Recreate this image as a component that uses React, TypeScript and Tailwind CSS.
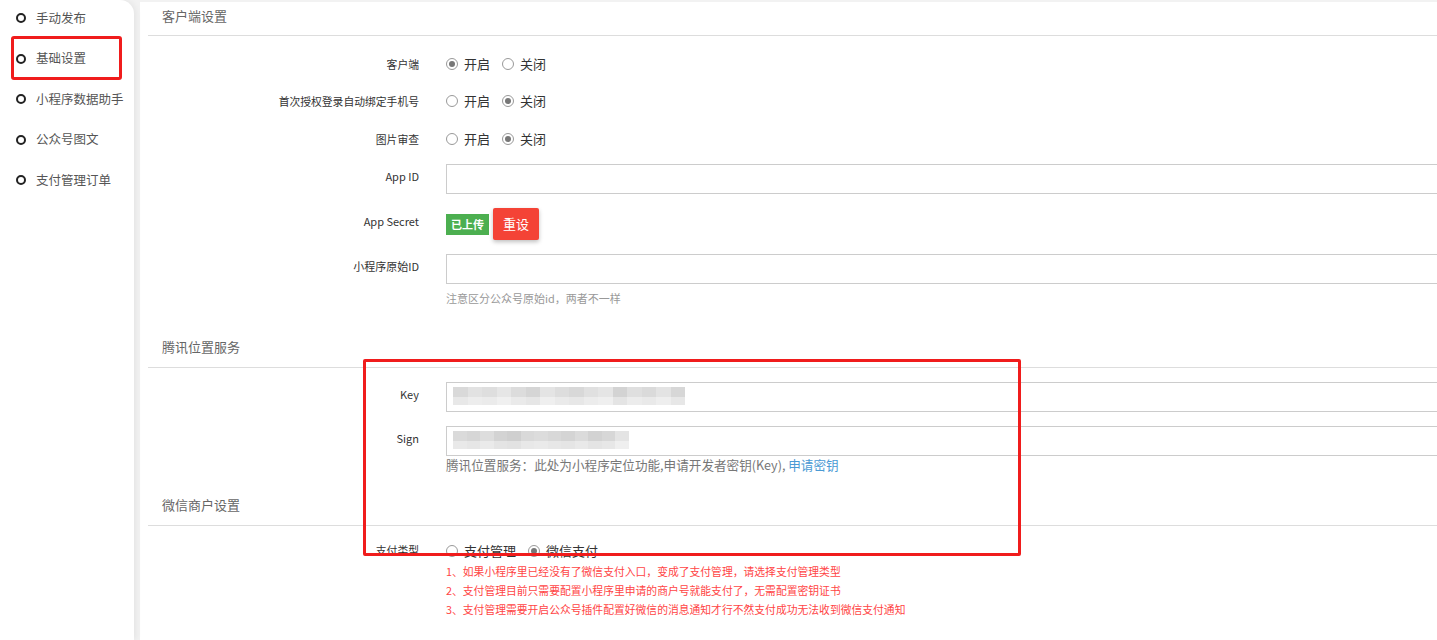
import React from 'react';

const FONT = { fontFamily: '"Microsoft YaHei", "Noto Sans CJK SC", "Liberation Sans", sans-serif' };

const MENU = ['手动发布', '基础设置', '小程序数据助手', '公众号图文', '支付管理订单'];

// mosaic shades for the masked key / sign values
const KEY_SHADES = ['#d9d9d9', '#e2e2e2', '#dedede', '#e6e6e6', '#dcdcdc', '#d5d5d5', '#e4e4e4', '#dddddd', '#d8d8d8', '#e0e0e0', '#e5e5e5', '#d3d3d3', '#dfdfdf', '#dadada', '#e3e3e3', '#d7d7d7'];
const SIGN_SHADES = ['#dadada', '#d6d6d6', '#dddddd', '#d3d3d3', '#cfcfcf', '#d9d9d9', '#dcdcdc', '#d8d8d8', '#d4d4d4', '#dbdbdb', '#d2d2d2', '#d7d7d7', '#e4e4e4'];

function Radio({ checked, label }: { checked: boolean; label: string }) {
  return (
    <span className="flex items-center gap-[6px] text-[13px] text-[#333]">
      <span className="flex h-[12px] w-[12px] items-center justify-center rounded-full border border-[#999] bg-white">
        {checked && <span className="h-[6px] w-[6px] rounded-full bg-[#777]" />}
      </span>
      {label}
    </span>
  );
}

function Row({ label, children, className = '' }: { label: string; children: React.ReactNode; className?: string }) {
  return (
    <div className={`flex items-center ${className}`}>
      <div className="w-[271px] shrink-0 text-right text-[10.8px] text-[#333]">{label}</div>
      <div className="ml-[27px] flex-1">{children}</div>
    </div>
  );
}

function Section({ title }: { title: string }) {
  return (
    <div className="flex h-[34px] items-center border-b border-[#ddd] pb-[6px] pl-[14px] text-[13px] text-[#666]">{title}</div>
  );
}

function Mosaic({ shades, cell }: { shades: string[]; cell: number }) {
  return (
    <div className="absolute left-[6px] top-[4px] flex flex-col blur-[0.6px]">
      <div className="flex">
        {shades.map((c, i) => (
          <span key={i} style={{ width: cell, height: 10, background: c }} />
        ))}
      </div>
      <div className="flex opacity-60">
        {shades.map((c, i) => (
          <span key={i} style={{ width: cell, height: 8, background: c }} />
        ))}
      </div>
    </div>
  );
}

function Input({ shades, cell }: { shades?: string[]; cell?: number }) {
  return (
    <div className="relative h-[30px] w-[1000px] border border-[#ccc] bg-white">
      {shades && cell && <Mosaic shades={shades} cell={cell} />}
    </div>
  );
}

export default function App() {
  return (
    <div className="relative h-[640px] w-[1437px] overflow-hidden bg-[#f2f2f2]" style={FONT}>
      <div className="flex h-full">
        <aside className="relative h-full w-[134px] shrink-0 rounded-tr-[14px] bg-white shadow-[2px_0_6px_rgba(0,0,0,0.06)]">
          <ul className="-mt-[2px] flex flex-col">
            {MENU.map((m) => (
              <li key={m} className="flex h-[40.5px] items-center gap-[10px] pl-[16px] text-[12.5px] text-[#555]">
                <span className="h-[10px] w-[10px] rounded-full border-2 border-[#222]" />
                {m}
              </li>
            ))}
          </ul>
          <div className="absolute left-[11px] top-[36px] h-[44px] w-[111px] rounded-[3px] border-[3px] border-[#f01c1c]" />
        </aside>

        <main className="ml-[6px] mt-[2px] flex-1 bg-white pl-[8px]">
          <Section title="客户端设置" />
          <div className="flex flex-col">
            <Row label="客户端" className="mt-[18px] h-[20px]">
              <div className="flex gap-[12px]">
                <Radio checked label="开启" />
                <Radio checked={false} label="关闭" />
              </div>
            </Row>
            <Row label="首次授权登录自动绑定手机号" className="mt-[17px] h-[20px]">
              <div className="flex gap-[12px]">
                <Radio checked={false} label="开启" />
                <Radio checked label="关闭" />
              </div>
            </Row>
            <Row label="图片审查" className="mt-[18px] h-[20px]">
              <div className="flex gap-[12px]">
                <Radio checked={false} label="开启" />
                <Radio checked label="关闭" />
              </div>
            </Row>
            <div className="mt-[15px] flex">
              <div className="w-[271px] shrink-0 pt-[4px] text-right text-[11px] text-[#333]">App ID</div>
              <div className="ml-[27px]">
                <Input />
              </div>
            </div>
            <div className="mt-[14px] flex h-[32px] items-center">
              <div className="w-[271px] shrink-0 pb-[6px] text-right text-[11px] text-[#333]">App Secret</div>
              <div className="ml-[27px] flex items-center gap-[4px]">
                <span className="flex h-[21px] items-center bg-[#4caf50] px-[5px] text-[11px] font-bold text-white">已上传</span>
                <span className="flex h-[32px] items-center rounded-[2px] bg-[#f44336] px-[10px] text-[13px] text-white shadow-[0_2px_4px_rgba(0,0,0,0.25)]">
                  重设
                </span>
              </div>
            </div>
            <div className="mt-[14px] flex">
              <div className="w-[271px] shrink-0 pt-[4px] text-right text-[11px] text-[#333]">小程序原始ID</div>
              <div className="ml-[27px]">
                <Input />
                <div className="mt-[6px] text-[11px] text-[#999]">注意区分公众号原始id，两者不一样</div>
              </div>
            </div>
          </div>

          <div className="mt-[27px]">
            <Section title="腾讯位置服务" />
          </div>
          <div className="mt-[14px] flex">
            <div className="w-[271px] shrink-0 pt-[4px] text-right text-[11px] text-[#333]">Key</div>
            <div className="ml-[27px]">
              <Input shades={KEY_SHADES} cell={14.5} />
            </div>
          </div>
          <div className="mt-[14px] flex">
            <div className="w-[271px] shrink-0 pt-[4px] text-right text-[11px] text-[#333]">Sign</div>
            <div className="ml-[27px]">
              <Input shades={SIGN_SHADES} cell={13.5} />
              <div className="mt-[1px] text-[12.6px] leading-[16px] text-[#777]">
                腾讯位置服务：此处为小程序定位功能,申请开发者密钥(Key), <span className="text-[#4a9ad4]">申请密钥</span>
              </div>
            </div>
          </div>

          <div className="mt-[19px]">
            <Section title="微信商户设置" />
          </div>
          <Row label="支付类型" className="mt-[16px] h-[18px]">
            <div className="flex gap-[12px]">
              <Radio checked={false} label="支付管理" />
              <Radio checked label="微信支付" />
            </div>
          </Row>
          <div className="ml-[298px] mt-[3px] flex flex-col gap-[2px] text-[10.8px] leading-[17px] text-[#ff4545]">
            <div>1、如果小程序里已经没有了微信支付入口，变成了支付管理，请选择支付管理类型</div>
            <div>2、支付管理目前只需要配置小程序里申请的商户号就能支付了，无需配置密钥证书</div>
            <div>3、支付管理需要开启公众号插件配置好微信的消息通知才行不然支付成功无法收到微信支付通知</div>
          </div>
        </main>
      </div>

      <div className="pointer-events-none absolute left-[363px] top-[359px] h-[197px] w-[658px] rounded-[2px] border-[3px] border-[#f01c1c]" />
    </div>
  );
}
